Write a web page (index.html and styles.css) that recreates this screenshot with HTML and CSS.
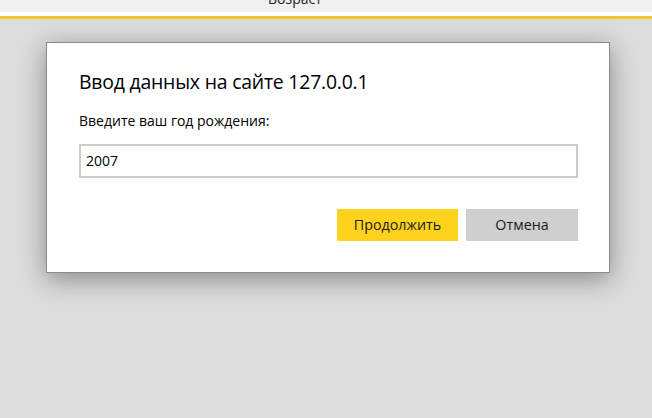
FILE: index.html
```html
<!DOCTYPE html>
<html lang="ru">
<head>
<meta charset="utf-8">
<link rel="stylesheet" href="styles.css">
</head>
<body>
<div class="topbar"><span class="toptext">Возраст</span></div>
<div class="strip"></div>
<div class="stage">
  <div class="dialog">
    <div class="title">Ввод данных на сайте 127.0.0.1</div>
    <div class="label">Введите ваш год рождения:</div>
    <div class="input">2007</div>
    <div class="actions">
      <div class="btn btn-ok">Продолжить</div>
      <div class="btn btn-cancel">Отмена</div>
    </div>
  </div>
</div>
</body>
</html>
```
FILE: styles.css
```css
html, body {
  margin: 0;
  padding: 0;
  height: 100%;
}
body {
  background: #dcdcdc;
  font-family: "Open Sans", "Noto Sans", sans-serif;
  color: #000;
  overflow: hidden;
}
.topbar {
  height: 12px;
  background: #f0f0f0;
  overflow: hidden;
  padding-left: 268px;
}
.toptext {
  display: block;
  font-size: 14px;
  line-height: 14px;
  margin-top: -8px;
  color: #222;
}
.strip {
  height: 4px;
  background: #fff;
  border-bottom: 3px solid #f2c624;
}
.stage {
  padding: 23px 0 0 46px;
}
.dialog {
  width: 564px;
  height: 231px;
  background: #fff;
  border: 1px solid #8a8a8a;
  box-shadow: 0 6px 24px rgba(0,0,0,0.38);
  padding: 0 31px 0 32px;
  box-sizing: border-box;
  display: flex;
  flex-direction: column;
}
.title {
  font-size: 19.4px;
  margin-top: 26px;
  line-height: 26px;
  letter-spacing: -0.2px;
}
.label {
  font-size: 14px;
  margin-top: 16px;
  line-height: 20px;
}
.input {
  margin-top: 13px;
  height: 34px;
  border: 2px solid #cccccc;
  box-sizing: border-box;
  font-size: 14px;
  line-height: 30px;
  padding-left: 5px;
}
.actions {
  margin-top: 31px;
  display: flex;
  justify-content: flex-end;
  gap: 8px;
}
.btn {
  height: 32px;
  line-height: 32px;
  font-size: 14.3px;
  text-align: center;
  color: #1a1a1a;
}
.btn-ok {
  width: 121px;
  background: #ffd21e;
}
.btn-cancel {
  width: 112px;
  background: #cfcfcf;
}
```
